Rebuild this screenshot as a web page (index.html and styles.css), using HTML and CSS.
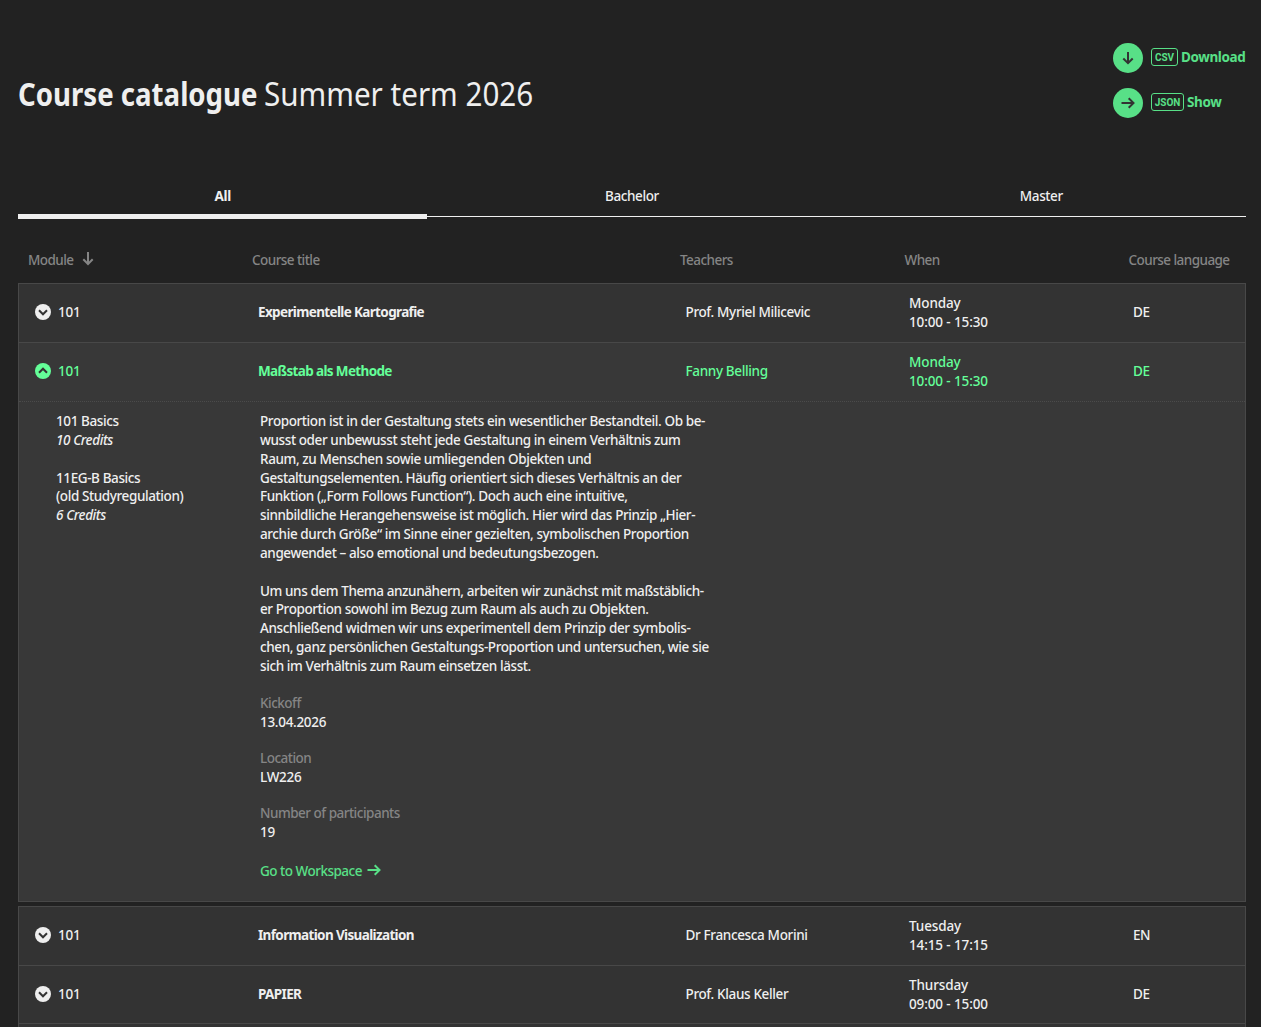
FILE: index.html
```html
<!DOCTYPE html>
<html lang="en">
<head>
  <meta charset="UTF-8">
  <title>Course catalogue Summer term 2026</title>
  <link rel="stylesheet" href="styles.css">
</head>
<body>
  <header class="page-header">
    <h1><strong>Course catalogue</strong> <span class="term">Summer term 2026</span></h1>
    <div class="exports">
      <a class="export" href="#">
        <span class="round"><svg width="14" height="14" viewBox="0 0 14 14"><path d="M7 1v11M2.300 7.500L7 12.200l4.700-4.700"/></svg></span>
        <span class="badge csv">CSV</span><span class="label">Download</span>
      </a>
      <a class="export" href="#">
        <span class="round"><svg width="14" height="14" viewBox="0 0 14 14"><path d="M.5 7h12M7.700 2.200L12.500 7 7.700 11.800"/></svg></span>
        <span class="badge json">JSON</span><span class="label">Show</span>
      </a>
    </div>
  </header>

  <nav class="tabs">
    <a class="tab active" href="#">All</a>
    <a class="tab" href="#">Bachelor</a>
    <a class="tab" href="#">Master</a>
  </nav>

  <div class="columns head">
    <div>Module <svg class="sort" width="12" height="14" viewBox="0 0 12 14"><path d="M6 0v12M1.300 7.300L6 12l4.700-4.700"/></svg></div>
    <div>Course title</div>
    <div>Teachers</div>
    <div>When</div>
    <div>Course language</div>
  </div>

  <main>
    <section class="course">
      <div class="columns row">
        <div class="module"><svg class="toggle" width="16" height="16" viewBox="0 0 16 16"><circle cx="8" cy="8" r="8"/><path d="M4 6.300l4 4 4-4"/></svg><span>101</span></div>
        <div class="title">Experimentelle Kartografie</div>
        <div class="teacher">Prof. Myriel Milicevic</div>
        <div class="when">Monday<br>10:00 - 15:30</div>
        <div>DE</div>
      </div>
    </section>

    <section class="course open">
      <div class="columns row">
        <div class="module"><svg class="toggle" width="16" height="16" viewBox="0 0 16 16"><circle cx="8" cy="8" r="8"/><path d="M4 9.700l4-4 4 4"/></svg><span>101</span></div>
        <div class="title">Maßstab als Methode</div>
        <div class="teacher">Fanny Belling</div>
        <div class="when">Monday<br>10:00 - 15:30</div>
        <div>DE</div>
      </div>
      <div class="details">
        <div class="modules">
          <p>101 Basics<br><em>10 Credits</em></p>
          <p>11EG-B Basics<br>(old Studyregulation)<br><em>6 Credits</em></p>
        </div>
        <div class="description">
          <p>Proportion ist in der Gestaltung stets ein wesentlicher Bestandteil. Ob be-<br>
          wusst oder unbewusst steht jede Gestaltung in einem Verhältnis zum<br>
          Raum, zu Menschen sowie umliegenden Objekten und<br>
          Gestaltungselementen. Häufig orientiert sich dieses Verhältnis an der<br>
          Funktion („Form Follows Function“). Doch auch eine intuitive,<br>
          sinnbildliche Herangehensweise ist möglich. Hier wird das Prinzip „Hier-<br>
          archie durch Größe“ im Sinne einer gezielten, symbolischen Proportion<br>
          angewendet – also emotional und bedeutungsbezogen.</p>
          <p>Um uns dem Thema anzunähern, arbeiten wir zunächst mit maßstäblich-<br>
          er Proportion sowohl im Bezug zum Raum als auch zu Objekten.<br>
          Anschließend widmen wir uns experimentell dem Prinzip der symbolis-<br>
          chen, ganz persönlichen Gestaltungs-Proportion und untersuchen, wie sie<br>
          sich im Verhältnis zum Raum einsetzen lässt.</p>
          <dl>
            <dt>Kickoff</dt>
            <dd>13.04.2026</dd>
            <dt>Location</dt>
            <dd>LW226</dd>
            <dt>Number of participants</dt>
            <dd>19</dd>
          </dl>
          <a class="workspace" href="#">Go to Workspace <svg width="14" height="12" viewBox="0 0 14 12"><path d="M.5 6H12.500M7.700 1.200L12.500 6 7.700 10.800"/></svg></a>
        </div>
      </div>
    </section>

    <section class="course">
      <div class="columns row">
        <div class="module"><svg class="toggle" width="16" height="16" viewBox="0 0 16 16"><circle cx="8" cy="8" r="8"/><path d="M4 6.300l4 4 4-4"/></svg><span>101</span></div>
        <div class="title">Information Visualization</div>
        <div class="teacher">Dr Francesca Morini</div>
        <div class="when">Tuesday<br>14:15 - 17:15</div>
        <div>EN</div>
      </div>
    </section>

    <section class="course">
      <div class="columns row last">
        <div class="module"><svg class="toggle" width="16" height="16" viewBox="0 0 16 16"><circle cx="8" cy="8" r="8"/><path d="M4 6.300l4 4 4-4"/></svg><span>101</span></div>
        <div class="title">PAPIER</div>
        <div class="teacher">Prof. Klaus Keller</div>
        <div class="when">Thursday<br>09:00 - 15:00</div>
        <div>DE</div>
      </div>
    </section>

    <section class="course next"></section>
  </main>
</body>
</html>
```

FILE: styles.css
```css
* {
  box-sizing: border-box;
}
body {
  margin: 0;
  padding: 0 15px 0 18px;
  height: 1027px;
  overflow: hidden;
  background-color: #222;
  color: #efefef;
  font-family: "Noto Sans", sans-serif;
  font-size: 13.5px;
  font-weight: 500;
  line-height: 18.85px;
  letter-spacing: -0.4px;
  white-space: nowrap;
}
a {
  color: inherit;
  text-decoration: none;
}
svg {
  flex-shrink: 0;
  fill: none;
  stroke: currentColor;
  stroke-width: 2;
}
/* Page title and export links */
.page-header {
  display: flex;
  justify-content: space-between;
  height: 177px;
}
h1 {
  display: flex;
  width: 520px;
  margin: 72px 0 0;
  font-size: 32px;
  line-height: 44px;
  font-weight: 400;
  letter-spacing: 0;
}
/* narrower letterforms for the headline */
h1 strong,
h1 .term {
  flex-shrink: 0;
  transform-origin: left;
}
h1 strong {
  width: 246px;
  font-weight: 700;
  transform: scaleX(0.863);
}
h1 .term {
  transform: scaleX(0.925);
}
.exports {
  width: 133px;
  padding-top: 43px;
  color: #58e087;
  font-weight: 700;
}
.export {
  display: flex;
  align-items: center;
  height: 30px;
  margin-bottom: 15px;
}
.round {
  display: flex;
  flex-shrink: 0;
  align-items: center;
  justify-content: center;
  width: 30px;
  height: 30px;
  margin-right: 8px;
  border-radius: 50%;
  background: #58e087;
  color: #333;
}
.badge {
  flex-shrink: 0;
  height: 18px;
  margin: 0 3px 2px 0;
  border: 1px solid #58e087;
  border-radius: 3px;
  font-family: "Roboto", sans-serif;
  font-size: 10px;
  line-height: 17px;
  text-align: center;
  letter-spacing: 0;
}
.badge.csv {
  width: 27px;
}
.badge.json {
  width: 33px;
}
.label {
  margin-bottom: 2px;
}
/* Tabs */
.tabs {
  display: flex;
  height: 42px;
}
.tab {
  flex: 1;
  height: 40px;
  padding-top: 10px;
  border-bottom: 1px solid #efefef;
  text-align: center;
}
.tab.active {
  height: 42px;
  border-bottom-width: 5px;
  font-weight: 700;
}
/* Course table */
.columns {
  display: grid;
  grid-template-columns: 224px 428px 224.500px 224px 1fr;
  align-items: center;
}
.head {
  height: 64px;
  padding: 18px 0 0 10px;
  color: #858585;
  letter-spacing: -0.55px;
}
.sort {
  margin-left: 5px;
  vertical-align: -1px;
}
.course {
  border: 1px solid #484848;
  border-bottom: 0;
  background: #333;
}
.row {
  grid-template-columns: 223px 427.500px 223.500px 224px 1fr;
  height: 58px;
  padding: 0 0 1px 16px;
}
.row.last {
  height: 57px;
  padding-bottom: 0;
}
.module {
  display: flex;
  align-items: center;
  gap: 7px;
  letter-spacing: -0.2px;
}
.toggle {
  margin-top: -1px;
}
.toggle circle {
  fill: #efefef;
  stroke: none;
}
.toggle path {
  stroke: #333;
}
.title {
  font-weight: 700;
  letter-spacing: -0.64px;
}
.teacher {
  letter-spacing: -0.35px;
}
.when {
  letter-spacing: -0.12px;
}
.next {
  height: 20px;
}
/* Expanded course */
.open {
  height: 560px;
  margin-bottom: 4px;
  border-bottom: 1px solid #484848;
  background: #383838;
}
.open .row {
  height: 59px;
  border-bottom: 1px dotted #4b4b4b;
  color: #64ff98;
}
.open .toggle circle {
  fill: #64ff98;
}
.details {
  display: grid;
  grid-template-columns: 204px 1fr;
  padding: 10px 0 0 37px;
}
.details p {
  margin: 0 0 18.850px;
}
.description p:last-of-type {
  margin-bottom: 18px;
}
dl {
  margin: 0;
}
dt {
  color: #858585;
  letter-spacing: -0.5px;
}
dd {
  margin: 0 0 17.500px;
  letter-spacing: -0.3px;
}
.workspace {
  display: block;
  margin-top: 20px;
  color: #58e087;
  letter-spacing: -0.5px;
}
.workspace svg {
  margin-left: 2px;
  vertical-align: 0;
}
```
